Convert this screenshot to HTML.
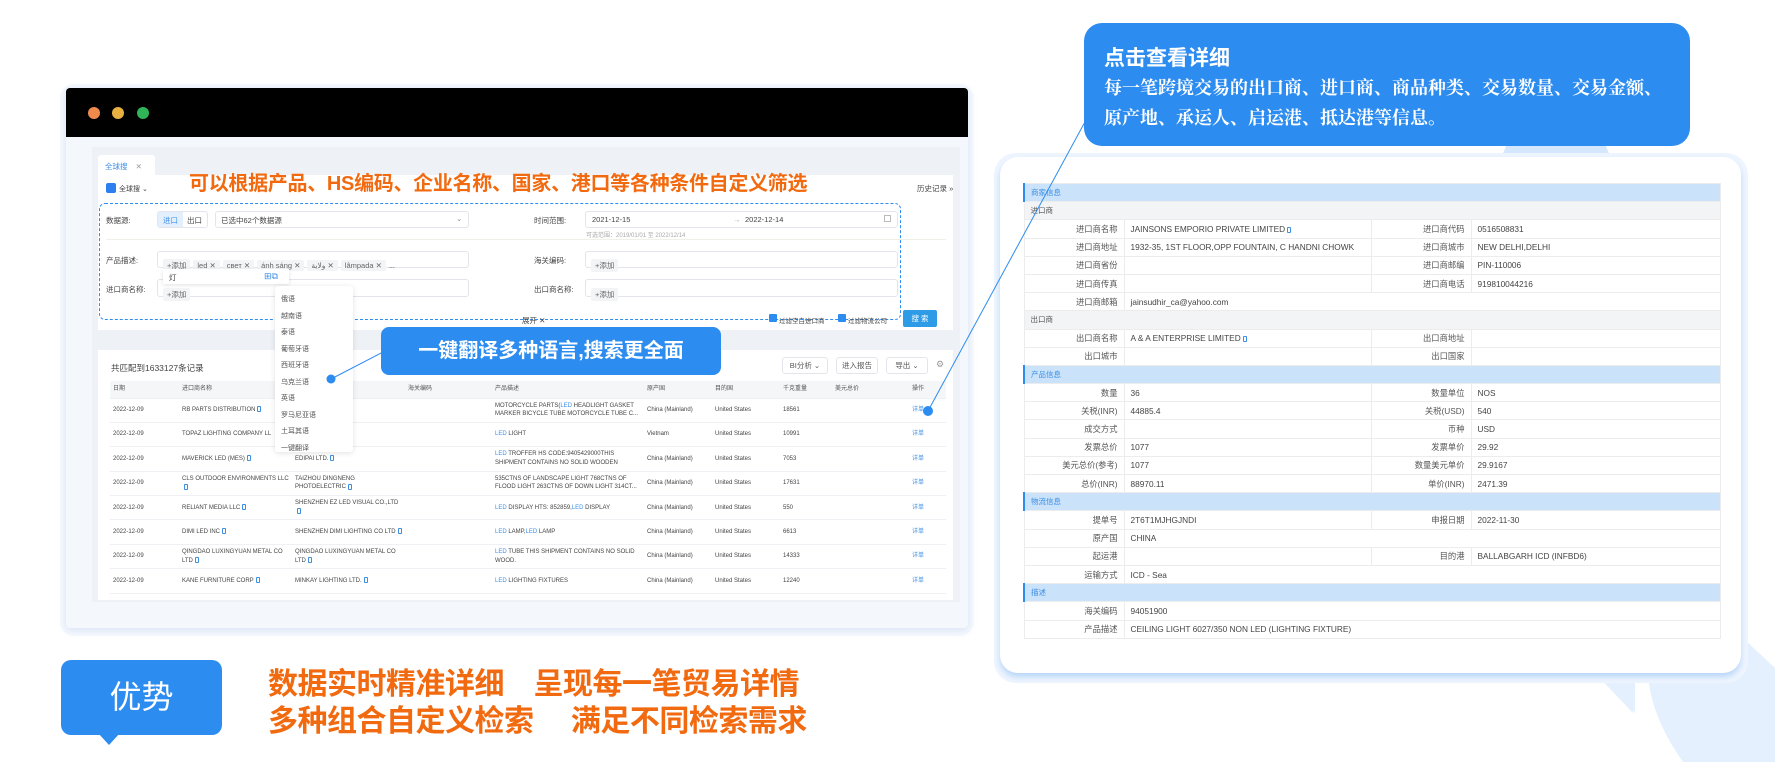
<!DOCTYPE html>
<html><head><meta charset="utf-8">
<style>
*{margin:0;padding:0;box-sizing:border-box}
body{width:1775px;height:762px;position:relative;overflow:hidden;background:#fff;font-family:"Liberation Sans","Noto Sans CJK SC",sans-serif;color:#333}
.a{position:absolute}
.t{font-size:7.5px;color:#444;white-space:nowrap}
.inp{position:absolute;border:1px solid #e3e5ea;border-radius:3px;background:#fff}
.tag{display:inline-block;background:#f3f4f6;color:#666;font-size:7.5px;padding:1px 4px;margin-right:3px;border-radius:2px}
.btn{position:absolute;border:1px solid #e3e5ea;border-radius:3px;background:#fff;font-size:7.5px;color:#555;text-align:center;line-height:15px}
table.m{position:absolute;left:110px;top:381px;width:836px;border-collapse:collapse;table-layout:fixed;font-size:6px;color:#444}
table.m td{height:24.4px;max-height:24.4px;border-bottom:1px solid #eef0f3;padding:0 3px;vertical-align:middle;line-height:8.5px;overflow:hidden}
table.m td div{max-height:17px;overflow:hidden}
table.m tr.h td{height:17px;background:#f5f6f8;color:#555}
.bl{color:#3d8fe6}
.cp{display:inline-block;width:4px;height:6px;border:1px solid #3d8fe6;border-radius:1px;margin-left:2px;vertical-align:middle}
table.d{position:absolute;left:1023px;top:183px;width:696px;border-collapse:collapse;table-layout:fixed;font-size:8.3px;color:#444}
table.d td{height:18.2px;border:1px solid #ececec;padding:0 6px;white-space:nowrap;overflow:hidden}
table.d td.l{text-align:right;color:#555}
table.d tr.s td{background:#cbe3fa;color:#3a8ee6;border-left:2px solid #2d8cf0;font-size:7.5px}
table.d tr.u td{background:#f3f4f6;color:#555;font-size:7.5px}
</style></head><body>

<svg class="a" style="left:0;top:0" width="1775" height="762">
<path d="M1595 650 L1745 640 L1775 668 L1775 762 L1683 762 Q1650 715 1648 673 L1635 673 L1635 713 Z" fill="#e4f0fd"/>
<path d="M1595 673 L1635 673 L1633 713 Z" fill="#e4f0fd"/>
</svg>

<div class="a" style="left:60px;top:84px;width:914px;height:552px;border-radius:14px;background:#f6f9fe"></div>
<div class="a" style="left:66px;top:88px;width:902px;height:540px;background:#f4f7fc;border-radius:4px;box-shadow:0 2px 8px rgba(120,160,220,.25)"></div>
<div class="a" style="left:66px;top:88px;width:902px;height:49px;background:#000;border-radius:4px 4px 0 0"></div>
<div class="a" style="left:88px;top:107px;width:12px;height:12px;border-radius:50%;background:#ef8a4c"></div>
<div class="a" style="left:112px;top:107px;width:12px;height:12px;border-radius:50%;background:#e7b040"></div>
<div class="a" style="left:137px;top:107px;width:12px;height:12px;border-radius:50%;background:#2fb457"></div>
<div class="a" style="left:92px;top:147px;width:868px;height:455px;background:#eef1f6"></div>

<div class="a" style="left:98px;top:155px;width:57px;height:22px;background:#fff;border-radius:3px 3px 0 0"></div>
<div class="a t" style="left:105px;top:161px;color:#3d8fe6">全球搜 <span style="color:#999;margin-left:6px">✕</span></div>
<div class="a" style="left:98px;top:175px;width:855px;height:155px;background:#fff"></div>
<div class="a" style="left:106px;top:183px;width:10px;height:10px;background:#2d7ff0;border-radius:2px"></div>
<div class="a t" style="left:119px;top:184px;font-size:7px">全球搜 ⌄</div>
<div class="a t" style="left:917px;top:183px">历史记录 »</div>
<div class="a" style="left:189px;top:167px;font-size:20px;font-weight:bold;color:#f26a10;white-space:nowrap;letter-spacing:-0.3px">可以根据产品、HS编码、企业名称、国家、港口等各种条件自定义筛选</div>
<div class="a" style="left:99px;top:203px;width:802px;height:117px;border:1.5px dashed #2d8cf0;border-radius:6px"></div>

<div class="a t" style="left:106px;top:215px">数据源:</div>
<div class="inp" style="left:157px;top:211px;width:51px;height:17px"></div>
<div class="a" style="left:158px;top:212px;width:25px;height:15px;background:#e3effd"></div>
<div class="a t" style="left:163px;top:215px;color:#3d8fe6">进口</div>
<div class="a t" style="left:187px;top:215px">出口</div>
<div class="inp" style="left:215px;top:211px;width:254px;height:17px"></div>
<div class="a t" style="left:221px;top:215px">已选中62个数据源</div>
<div class="a t" style="left:456px;top:214px;color:#888">⌄</div>
<div class="a t" style="left:534px;top:215px">时间范围:</div>
<div class="inp" style="left:585px;top:211px;width:313px;height:17px"></div>
<div class="a t" style="left:592px;top:215px">2021-12-15</div>
<div class="a t" style="left:733px;top:215px;color:#aaa">→</div>
<div class="a t" style="left:745px;top:215px">2022-12-14</div>
<div class="a" style="left:884px;top:215px;width:7px;height:7px;border:1px solid #bbb"></div>
<div class="a t" style="left:586px;top:230px;font-size:6px;color:#aaa">可选范围：2019/01/01 至 2022/12/14</div>
<div class="a" style="left:106px;top:239px;width:840px;height:1px;background:#f0f0e8"></div>

<div class="a t" style="left:106px;top:255px">产品描述:</div>
<div class="inp" style="left:157px;top:251px;width:312px;height:17px;padding:3px 5px;white-space:nowrap"><span class="tag">+添加</span><span class="tag">led ✕</span><span class="tag">свет ✕</span><span class="tag">ánh sáng ✕</span><span class="tag">ولاية ✕</span><span class="tag">lâmpada ✕</span><span style="font-size:7px">...</span></div>
<div class="a t" style="left:534px;top:255px">海关编码:</div>
<div class="inp" style="left:585px;top:251px;width:313px;height:17px;padding:3px 5px"><span class="tag">+添加</span></div>
<div class="a t" style="left:106px;top:284px">进口商名称:</div>
<div class="inp" style="left:157px;top:279px;width:312px;height:18px;padding:4px 5px"><span class="tag">+添加</span></div>
<div class="a t" style="left:534px;top:284px">出口商名称:</div>
<div class="inp" style="left:585px;top:279px;width:313px;height:18px;padding:4px 5px"><span class="tag">+添加</span></div>
<div class="a" style="left:163px;top:269px;width:126px;height:15px;background:#fff;box-shadow:0 1px 4px rgba(0,0,0,.12)"></div>
<div class="a t" style="left:169px;top:272px">灯</div>
<div class="a t" style="left:264px;top:271px;color:#3d8fe6;font-size:9px">⊞⧉</div>
<div class="a t" style="left:522px;top:315px">展开 ✕</div>
<div class="a" style="left:769px;top:314px;width:8px;height:8px;background:#2d8cf0;border-radius:1px"></div>
<div class="a t" style="left:779px;top:315px;font-size:6.5px">过滤空白进口商</div>
<div class="a" style="left:838px;top:314px;width:8px;height:8px;background:#2d8cf0;border-radius:1px"></div>
<div class="a t" style="left:848px;top:315px;font-size:6.5px">过滤物流公司</div>
<div class="a" style="left:903px;top:310px;width:34px;height:17px;background:#2e9be6;border-radius:2px;color:#fff;font-size:7.5px;text-align:center;line-height:17px">搜 索</div>

<div class="a" style="left:98px;top:350px;width:855px;height:250px;background:#fff;overflow:hidden">
</div>
<div class="a t" style="left:111px;top:362px;font-size:8.5px">共匹配到1633127条记录</div>
<div class="btn" style="left:782px;top:357px;width:46px;height:17px">BI分析 ⌄</div>
<div class="btn" style="left:836px;top:357px;width:42px;height:17px">进入报告</div>
<div class="btn" style="left:886px;top:357px;width:42px;height:17px">导出 ⌄</div>
<div class="a t" style="left:936px;top:359px;color:#999;font-size:9px">⚙</div>
<div class="a" style="left:0;top:0;width:960px;height:599px;overflow:hidden">
<table class="m">
<colgroup><col style="width:69px"><col style="width:113px"><col style="width:113px"><col style="width:87px"><col style="width:152px"><col style="width:68px"><col style="width:68px"><col style="width:52px"><col style="width:58px"><col style="width:56px"></colgroup>
<tr class="h"><td>日期</td><td>进口商名称</td><td></td><td>海关编码</td><td>产品描述</td><td>原产国</td><td>目的国</td><td>千克重量</td><td>美元总价</td><td style="text-align:center">操作</td></tr>
<tr><td>2022-12-09</td><td><div>RB PARTS DISTRIBUTION<span class="cp"></span></div></td><td><div>GRAND EXP. CO.</div></td><td></td><td><div>MOTORCYCLE PARTS(<span class="bl">LED</span> HEADLIGHT GASKET MARKER BICYCLE TUBE MOTORCYCLE TUBE C...</div></td><td>China (Mainland)</td><td>United States</td><td>18561</td><td></td><td class="bl" style="text-align:center">详单</td></tr>
<tr><td>2022-12-09</td><td><div style="white-space:nowrap">TOPAZ LIGHTING COMPANY LL</div></td><td><div>RE COMPANY</div></td><td></td><td><span class="bl">LED</span> LIGHT</td><td>Vietnam</td><td>United States</td><td>10991</td><td></td><td class="bl" style="text-align:center">详单</td></tr>
<tr><td>2022-12-09</td><td><div>MAVERICK LED (MES)<span class="cp"></span></div></td><td><div>EDIPAI LTD.<span class="cp"></span></div></td><td></td><td><div><span class="bl">LED</span> TROFFER HS CODE:9405429000THIS SHIPMENT CONTAINS NO SOLID WOODEN PACKING...</div></td><td>China (Mainland)</td><td>United States</td><td>7053</td><td></td><td class="bl" style="text-align:center">详单</td></tr>
<tr><td>2022-12-09</td><td><div>CLS OUTDOOR ENVIRONMENTS LLC<span class="cp"></span></div></td><td><div>TAIZHOU DINGNENG PHOTOELECTRIC<span class="cp"></span></div></td><td></td><td><div>535CTNS OF LANDSCAPE LIGHT 768CTNS OF FLOOD LIGHT 263CTNS OF DOWN LIGHT 314CT...</div></td><td>China (Mainland)</td><td>United States</td><td>17631</td><td></td><td class="bl" style="text-align:center">详单</td></tr>
<tr><td>2022-12-09</td><td><div>RELIANT MEDIA LLC<span class="cp"></span></div></td><td><div>SHENZHEN EZ LED VISUAL CO.,LTD<span class="cp"></span></div></td><td></td><td><div><span class="bl">LED</span> DISPLAY HTS: 852859,<span class="bl">LED</span> DISPLAY</div></td><td>China (Mainland)</td><td>United States</td><td>550</td><td></td><td class="bl" style="text-align:center">详单</td></tr>
<tr><td>2022-12-09</td><td><div>DIMI LED INC<span class="cp"></span></div></td><td><div>SHENZHEN DIMI LIGHTING CO LTD<span class="cp"></span></div></td><td></td><td><div><span class="bl">LED</span> LAMP,<span class="bl">LED</span> LAMP</div></td><td>China (Mainland)</td><td>United States</td><td>6613</td><td></td><td class="bl" style="text-align:center">详单</td></tr>
<tr><td>2022-12-09</td><td><div>QINGDAO LUXINGYUAN METAL CO LTD<span class="cp"></span></div></td><td><div>QINGDAO LUXINGYUAN METAL CO LTD<span class="cp"></span></div></td><td></td><td><div><span class="bl">LED</span> TUBE THIS SHIPMENT CONTAINS NO SOLID WOOD.</div></td><td>China (Mainland)</td><td>United States</td><td>14333</td><td></td><td class="bl" style="text-align:center">详单</td></tr>
<tr><td>2022-12-09</td><td><div>KANE FURNITURE CORP<span class="cp"></span></div></td><td><div>MINKAY LIGHTING LTD.<span class="cp"></span></div></td><td></td><td><div><span class="bl">LED</span> LIGHTING FIXTURES</div></td><td>China (Mainland)</td><td>United States</td><td>12240</td><td></td><td class="bl" style="text-align:center">详单</td></tr>
<tr><td></td><td>MITSUBISHI ELECTRIC POWER</td><td>YIHUAN OPTOELECTRONICS CO</td><td></td><td></td><td></td><td></td><td></td><td></td><td></td></tr>
</table>
</div>

<div class="a" style="left:275px;top:286px;width:78px;height:166px;background:#fff;border-radius:3px;box-shadow:0 1px 6px rgba(0,0,0,.12)"></div>
<div class="a t" style="left:281px;top:292px;line-height:16.5px;font-size:7px;color:#555">俄语<br>越南语<br>泰语<br>葡萄牙语<br>西班牙语<br>乌克兰语<br>英语<br>罗马尼亚语<br>土耳其语<br>一键翻译</div>

<div class="a" style="left:381px;top:327px;width:340px;height:48px;background:#2d8cf0;border-radius:8px;color:#fff;font-size:20px;font-weight:bold;line-height:48px;text-align:center;white-space:nowrap">一键翻译多种语言,搜索更全面</div>

<!-- right card -->
<div class="a" style="left:1500px;top:140px;width:112px;height:20px;background:#d4e7fc;clip-path:polygon(8% 0,92% 0,100% 100%,0 100%)"></div>
<div class="a" style="left:994px;top:153px;width:754px;height:530px;border-radius:22px;background:#eef5fe"></div>
<div class="a" style="left:1000px;top:157px;width:741px;height:516px;border-radius:18px;background:#fff;box-shadow:0 4px 6px rgba(150,195,245,.6)"></div>
<table class="d">
<colgroup><col style="width:100px"><col style="width:247px"><col style="width:100px"><col style="width:249px"></colgroup>
<tr class="s"><td colspan="4">商家信息</td></tr>
<tr class="u"><td colspan="4">进口商</td></tr>
<tr><td class="l">进口商名称</td><td>JAINSONS EMPORIO PRIVATE LIMITED<span class="cp"></span></td><td class="l">进口商代码</td><td>0516508831</td></tr>
<tr><td class="l">进口商地址</td><td>1932-35, 1ST FLOOR,OPP FOUNTAIN, C HANDNI CHOWK</td><td class="l">进口商城市</td><td>NEW DELHI,DELHI</td></tr>
<tr><td class="l">进口商省份</td><td></td><td class="l">进口商邮编</td><td>PIN-110006</td></tr>
<tr><td class="l">进口商传真</td><td></td><td class="l">进口商电话</td><td>919810044216</td></tr>
<tr><td class="l">进口商邮箱</td><td colspan="3">jainsudhir_ca@yahoo.com</td></tr>
<tr class="u"><td colspan="4">出口商</td></tr>
<tr><td class="l">出口商名称</td><td>A &amp; A ENTERPRISE LIMITED<span class="cp"></span></td><td class="l">出口商地址</td><td></td></tr>
<tr><td class="l">出口城市</td><td></td><td class="l">出口国家</td><td></td></tr>
<tr class="s"><td colspan="4">产品信息</td></tr>
<tr><td class="l">数量</td><td>36</td><td class="l">数量单位</td><td>NOS</td></tr>
<tr><td class="l">关税(INR)</td><td>44885.4</td><td class="l">关税(USD)</td><td>540</td></tr>
<tr><td class="l">成交方式</td><td></td><td class="l">币种</td><td>USD</td></tr>
<tr><td class="l">发票总价</td><td>1077</td><td class="l">发票单价</td><td>29.92</td></tr>
<tr><td class="l">美元总价(参考)</td><td>1077</td><td class="l">数量美元单价</td><td>29.9167</td></tr>
<tr><td class="l">总价(INR)</td><td>88970.11</td><td class="l">单价(INR)</td><td>2471.39</td></tr>
<tr class="s"><td colspan="4">物流信息</td></tr>
<tr><td class="l">提单号</td><td>2T6T1MJHGJNDI</td><td class="l">申报日期</td><td>2022-11-30</td></tr>
<tr><td class="l">原产国</td><td colspan="3">CHINA</td></tr>
<tr><td class="l">起运港</td><td></td><td class="l">目的港</td><td>BALLABGARH ICD (INFBD6)</td></tr>
<tr><td class="l">运输方式</td><td colspan="3">ICD - Sea</td></tr>
<tr class="s"><td colspan="4">描述</td></tr>
<tr><td class="l">海关编码</td><td colspan="3">94051900</td></tr>
<tr><td class="l">产品描述</td><td colspan="3">CEILING LIGHT 6027/350 NON LED (LIGHTING FIXTURE)</td></tr>
</table>

<svg class="a" style="left:0;top:0" width="1775" height="762">
<line x1="383" y1="352" x2="331" y2="379" stroke="#2d8cf0" stroke-width="1"/>
<circle cx="331" cy="379" r="4.5" fill="#2d8cf0"/>
<line x1="1086" y1="120" x2="928" y2="411" stroke="#2d8cf0" stroke-width="1"/>
<circle cx="928" cy="411" r="5" fill="#2d8cf0"/>
</svg>

<div class="a" style="left:1084px;top:23px;width:606px;height:123px;background:#2d8cf0;border-radius:18px"></div>
<div class="a" style="left:1104px;top:42px;color:#fff;font-size:21px;font-weight:bold;white-space:nowrap">点击查看详细</div>
<div class="a" style="left:1104px;top:73px;color:#fff;font-size:18px;line-height:30px;white-space:nowrap;font-weight:bold;font-family:'Liberation Serif','Noto Serif CJK SC',serif">每一笔跨境交易的出口商、进口商、商品种类、交易数量、交易金额、<br>原产地、承运人、启运港、抵达港等信息。</div>

<div class="a" style="left:61px;top:660px;width:161px;height:75px;background:#2d8cf0;border-radius:10px"></div>
<div class="a" style="left:98px;top:733px;width:0;height:0;border-left:11px solid transparent;border-right:11px solid transparent;border-top:12px solid #2d8cf0"></div>
<div class="a" style="left:61px;top:675px;width:161px;text-align:center;color:#fff;font-size:32px;line-height:44px">优势</div>
<div class="a" style="left:268px;top:666px;color:#f26a10;font-size:30px;font-weight:bold;line-height:37px;white-space:nowrap;letter-spacing:-0.5px">数据实时精准详细　呈现每一笔贸易详情<br>多种组合自定义检索　 满足不同检索需求</div>
</body></html>
